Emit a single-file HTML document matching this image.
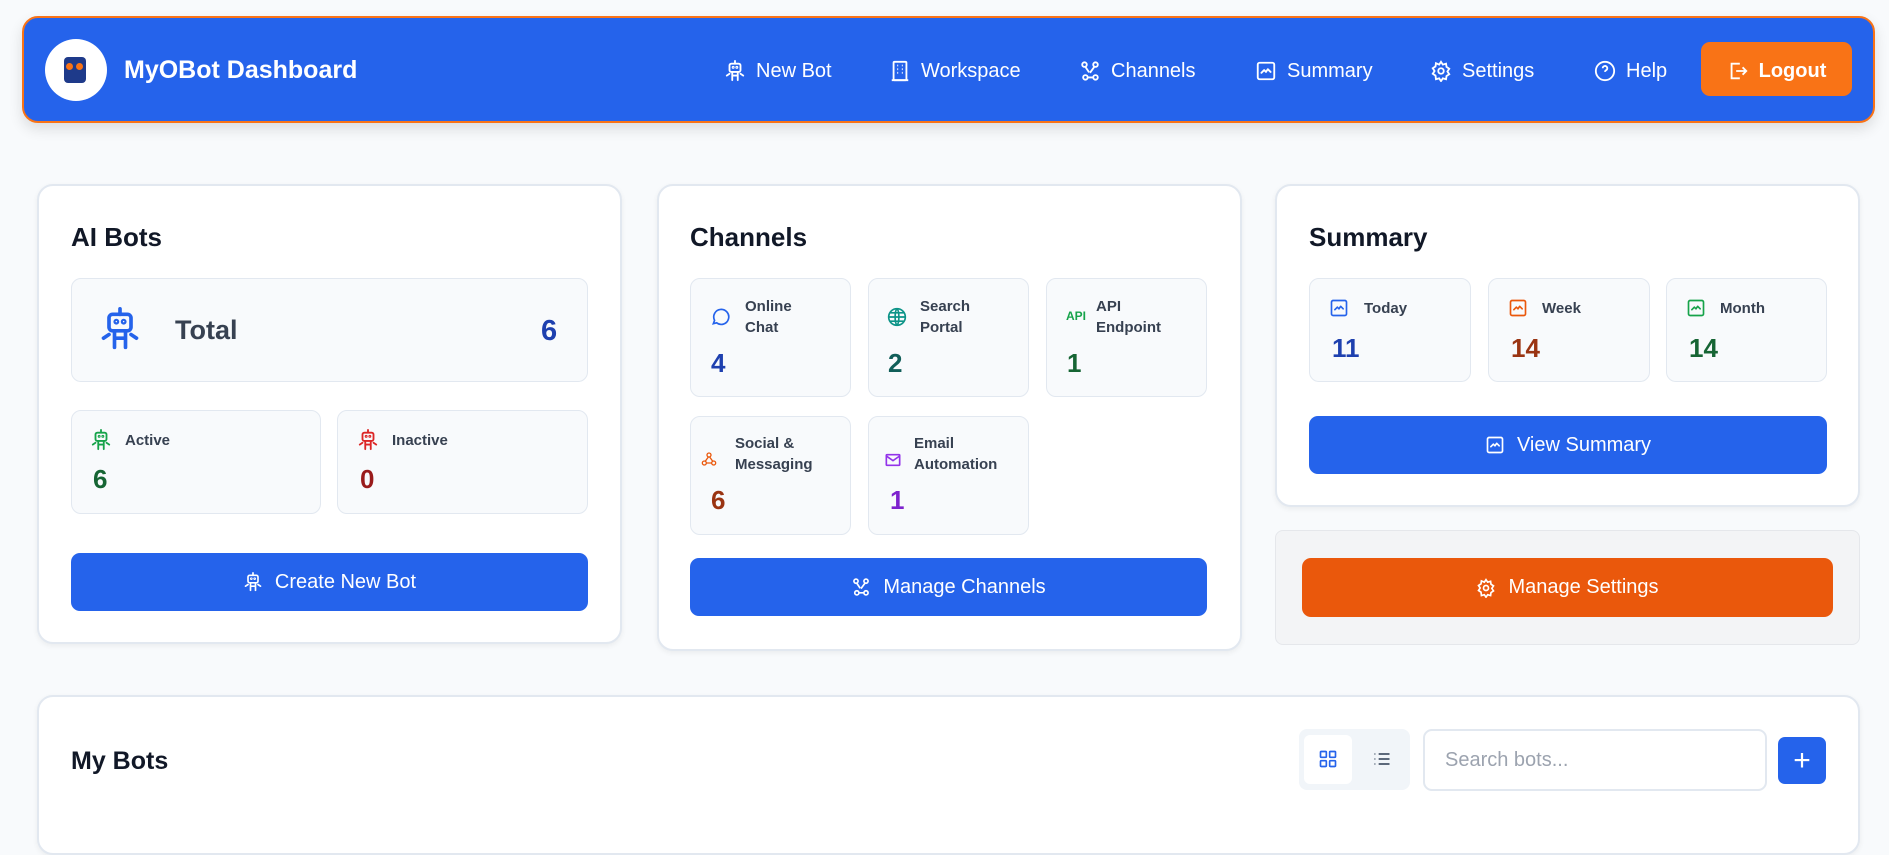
<!DOCTYPE html>
<html><head><meta charset="utf-8"><style>
*{box-sizing:border-box;margin:0;padding:0}
body{width:1889px;height:824px;overflow:hidden;background:#f8fafc;font-family:"Liberation Sans",sans-serif;position:relative;color:#111827}
.a{position:absolute}
.hdr{left:22px;top:16px;width:1853px;height:107px;background:#2563eb;border:2px solid #f97316;border-radius:16px;box-shadow:0 6px 14px rgba(0,0,0,.12)}
.nav{top:57px;color:#fff;font-size:20px;display:flex;align-items:center;gap:10px;height:28px}
.card{background:#fff;border:2px solid #e2e8f0;border-radius:16px;box-shadow:0 2px 6px rgba(0,0,0,.06)}
.h2{font-size:26px;font-weight:bold;color:#111827}
.tile{background:#f8fafc;border:1px solid #e2e8f0;border-radius:10px}
.lbl{font-size:15px;font-weight:bold;color:#374151;line-height:21px}
.num{font-size:26px;font-weight:bold}
.btn{background:#2563eb;color:#fff;border-radius:9px;display:flex;align-items:center;justify-content:center;gap:12px;font-size:20px}
svg{display:block}
</style></head><body>
<svg width="0" height="0" style="position:absolute"><defs>
<symbol id="bot" viewBox="0 0 24 24"><g fill="none" stroke="currentColor" stroke-width="2" stroke-linecap="round" stroke-linejoin="round"><rect x="6" y="4" width="12" height="9" rx="2"/><path d="M12 1v3M9 13v9M15 13v9M9 17h6M6 15l-3 2M18 15l3 2"/><circle cx="10" cy="8" r=".6"/><circle cx="14" cy="8" r=".6"/></g></symbol>
<symbol id="chart" viewBox="0 0 24 24"><g fill="none" stroke="currentColor" stroke-width="2" stroke-linecap="round" stroke-linejoin="round"><rect x="3" y="3" width="18" height="18" rx="2"/><path d="M7 14l3-3 2 2 2-3 3 3"/></g></symbol>
<symbol id="gear" viewBox="0 0 24 24"><g fill="none" stroke="currentColor" stroke-width="2"><circle cx="12" cy="12" r="3"/><path d="M12 2l2 3 3.5-1 .5 3.5 3 2-2 3 2 3-3 2-.5 3.5-3.5-1-2 3-2-3-3.5 1L6 17l-3-2 2-3-2-3 3-2 .5-3.5L10 5z"/></g></symbol>
<symbol id="hub" viewBox="0 0 24 24"><g fill="none" stroke="currentColor" stroke-width="2"><circle cx="6" cy="5" r="2.5"/><circle cx="18" cy="5" r="2.5"/><circle cx="7" cy="19" r="2.5"/><circle cx="18" cy="19" r="2.5"/><path d="M7 7.5l4 6M17 7l-5 7M9.5 19h6"/></g></symbol>
</defs></svg>

<div class="a hdr"></div>
<div class="a" style="left:45px;top:39px;width:62px;height:62px;border-radius:50%;background:#fff"></div>
<div class="a" style="left:64px;top:57px;width:22px;height:26px;background:#1e3a8a;border-radius:4px"></div>
<div class="a" style="left:66px;top:63px;width:7px;height:7px;border-radius:50%;background:#f97316"></div>
<div class="a" style="left:76px;top:63px;width:7px;height:7px;border-radius:50%;background:#f97316"></div>
<div class="a" style="left:124px;top:56px;color:#fff;font-size:25px;font-weight:bold">MyOBot Dashboard</div>

<div class="a nav" style="left:724px"><svg width="22" height="22" style="color:#fff"><use href="#bot"/></svg>New Bot</div>
<div class="a nav" style="left:889px"><svg width="22" height="22" viewBox="0 0 24 24" fill="none" stroke="#fff" stroke-width="2"><rect x="5" y="2" width="14" height="20" rx="1"/><path d="M9 6h1M14 6h1M9 10h1M14 10h1M9 14h1M14 14h1M3 22h18"/></svg>Workspace</div>
<div class="a nav" style="left:1079px"><svg width="22" height="22" style="color:#fff"><use href="#hub"/></svg>Channels</div>
<div class="a nav" style="left:1255px"><svg width="22" height="22" style="color:#fff"><use href="#chart"/></svg>Summary</div>
<div class="a nav" style="left:1430px"><svg width="22" height="22" style="color:#fff"><use href="#gear"/></svg>Settings</div>
<div class="a nav" style="left:1594px"><svg width="22" height="22" viewBox="0 0 24 24" fill="none" stroke="#fff" stroke-width="2"><circle cx="12" cy="12" r="10"/><path d="M9.5 9a2.5 2.5 0 1 1 3.5 2.3c-.7.4-1 1-1 1.7M12 17h.01"/></svg>Help</div>
<div class="a btn" style="left:1701px;top:42px;width:151px;height:54px;background:#f97316;font-weight:bold;font-size:20px;gap:10px;padding-top:4px"><svg width="22" height="22" viewBox="0 0 24 24" fill="none" stroke="#fff" stroke-width="2"><path d="M14 4H5v16h9M10 12h11M17 8l4 4-4 4"/></svg>Logout</div>

<!-- AI Bots -->
<div class="a card" style="left:37px;top:184px;width:585px;height:460px"></div>
<div class="a h2" style="left:71px;top:222px">AI Bots</div>
<div class="a tile" style="left:71px;top:278px;width:517px;height:104px"></div>
<svg class="a" style="left:98px;top:305px;color:#2563eb" width="44" height="48"><use href="#bot"/></svg>
<div class="a" style="left:175px;top:315px;font-size:27px;font-weight:bold;color:#374151">Total</div>
<div class="a num" style="left:541px;top:315px;color:#1e40af;font-size:29px">6</div>
<div class="a tile" style="left:71px;top:410px;width:250px;height:104px"></div>
<div class="a tile" style="left:337px;top:410px;width:251px;height:104px"></div>
<svg class="a" style="left:90px;top:429px;color:#16a34a" width="22" height="22"><use href="#bot"/></svg>
<div class="a lbl" style="left:125px;top:430px">Active</div>
<div class="a num" style="left:93px;top:464px;color:#166534">6</div>
<svg class="a" style="left:357px;top:429px;color:#dc2626" width="22" height="22"><use href="#bot"/></svg>
<div class="a lbl" style="left:392px;top:430px">Inactive</div>
<div class="a num" style="left:360px;top:464px;color:#991b1b">0</div>
<div class="a btn" style="left:71px;top:553px;width:517px;height:58px"><svg width="20" height="20" style="color:#fff"><use href="#bot"/></svg>Create New Bot</div>

<!-- Channels -->
<div class="a card" style="left:657px;top:184px;width:585px;height:467px"></div>
<div class="a h2" style="left:690px;top:222px">Channels</div>
<div class="a tile" style="left:690px;top:278px;width:161px;height:119px"></div>
<div class="a tile" style="left:868px;top:278px;width:161px;height:119px"></div>
<div class="a tile" style="left:1046px;top:278px;width:161px;height:119px"></div>
<div class="a tile" style="left:690px;top:416px;width:161px;height:119px"></div>
<div class="a tile" style="left:868px;top:416px;width:161px;height:119px"></div>
<svg class="a" style="left:710px;top:307px" width="20" height="20" viewBox="0 0 24 24" fill="none" stroke="#2563eb" stroke-width="2"><path d="M4 20l1.5-4A9 9 0 1 1 8 19z"/></svg>
<div class="a lbl" style="left:745px;top:296px">Online<br>Chat</div>
<div class="a num" style="left:711px;top:348px;color:#1e40af">4</div>
<svg class="a" style="left:887px;top:307px" width="20" height="20" viewBox="0 0 24 24" fill="none" stroke="#0d9488" stroke-width="2"><circle cx="12" cy="12" r="10"/><path d="M2 12h20M12 2c3 3 3 17 0 20M12 2c-3 3-3 17 0 20M4 7h16M4 17h16"/></svg>
<div class="a lbl" style="left:920px;top:296px">Search<br>Portal</div>
<div class="a num" style="left:888px;top:348px;color:#115e59">2</div>
<div class="a" style="left:1066px;top:309px;color:#16a34a;font-size:12px;font-weight:bold">API</div>
<div class="a lbl" style="left:1096px;top:296px">API<br>Endpoint</div>
<div class="a num" style="left:1067px;top:348px;color:#166534">1</div>
<svg class="a" style="left:701px;top:451px" width="16" height="16" viewBox="0 0 24 24" fill="none" stroke="#ea580c" stroke-width="2"><circle cx="12" cy="6" r="3"/><circle cx="5" cy="18" r="3"/><circle cx="19" cy="18" r="3"/><path d="M11 9l-5 7M8 18h8M13 9l5 7"/></svg>
<div class="a lbl" style="left:735px;top:433px">Social &amp;<br>Messaging</div>
<div class="a num" style="left:711px;top:485px;color:#9a3412">6</div>
<svg class="a" style="left:885px;top:452px" width="16" height="16" viewBox="0 0 24 24" fill="none" stroke="#9333ea" stroke-width="2.5"><rect x="2" y="4" width="20" height="16" rx="1"/><path d="M2 6l10 7 10-7"/></svg>
<div class="a lbl" style="left:914px;top:433px">Email<br>Automation</div>
<div class="a num" style="left:890px;top:485px;color:#7e22ce">1</div>
<div class="a btn" style="left:690px;top:558px;width:517px;height:58px"><svg width="20" height="20" style="color:#fff"><use href="#hub"/></svg>Manage Channels</div>

<!-- Summary -->
<div class="a card" style="left:1275px;top:184px;width:585px;height:323px"></div>
<div class="a h2" style="left:1309px;top:222px">Summary</div>
<div class="a tile" style="left:1309px;top:278px;width:162px;height:104px"></div>
<div class="a tile" style="left:1488px;top:278px;width:162px;height:104px"></div>
<div class="a tile" style="left:1666px;top:278px;width:161px;height:104px"></div>
<svg class="a" style="left:1329px;top:298px;color:#2563eb" width="20" height="20"><use href="#chart"/></svg>
<div class="a lbl" style="left:1364px;top:298px">Today</div>
<div class="a num" style="left:1332px;top:333px;color:#1e40af">11</div>
<svg class="a" style="left:1508px;top:298px;color:#ea580c" width="20" height="20"><use href="#chart"/></svg>
<div class="a lbl" style="left:1542px;top:298px">Week</div>
<div class="a num" style="left:1511px;top:333px;color:#9a3412">14</div>
<svg class="a" style="left:1686px;top:298px;color:#16a34a" width="20" height="20"><use href="#chart"/></svg>
<div class="a lbl" style="left:1720px;top:298px">Month</div>
<div class="a num" style="left:1689px;top:333px;color:#166534">14</div>
<div class="a btn" style="left:1309px;top:416px;width:518px;height:58px"><svg width="20" height="20" style="color:#fff"><use href="#chart"/></svg>View Summary</div>

<div class="a" style="left:1275px;top:530px;width:585px;height:115px;background:#f3f4f6;border:1px solid #e5e7eb;border-radius:8px"></div>
<div class="a btn" style="left:1302px;top:558px;width:531px;height:59px;background:#ea580c"><svg width="20" height="20" style="color:#fff"><use href="#gear"/></svg>Manage Settings</div>

<!-- My Bots -->
<div class="a card" style="left:37px;top:695px;width:1823px;height:160px"></div>
<div class="a h2" style="left:71px;top:747px;font-size:25px">My Bots</div>
<div class="a" style="left:1299px;top:729px;width:111px;height:61px;background:#f1f5f9;border-radius:8px"></div>
<div class="a" style="left:1304px;top:735px;width:48px;height:49px;background:#fff;border-radius:6px"></div>
<svg class="a" style="left:1318px;top:749px" width="20" height="20" viewBox="0 0 24 24" fill="none" stroke="#2563eb" stroke-width="2"><rect x="3" y="3" width="7" height="7" rx="1"/><rect x="14" y="3" width="7" height="7" rx="1"/><rect x="3" y="14" width="7" height="7" rx="1"/><rect x="14" y="14" width="7" height="7" rx="1"/></svg>
<svg class="a" style="left:1372px;top:749px" width="20" height="20" viewBox="0 0 24 24" fill="none" stroke="#475569" stroke-width="2"><path d="M8 6h13M8 12h13M8 18h13M3 6h1M3 12h1M3 18h1"/></svg>
<div class="a" style="left:1423px;top:729px;width:344px;height:62px;background:#fff;border:2px solid #e2e8f0;border-radius:9px;padding:0 20px;line-height:58px;font-size:20px;color:#9ca3af">Search bots...</div>
<div class="a btn" style="left:1778px;top:737px;width:48px;height:47px;font-size:30px;border-radius:7px">+</div>
</body></html>
